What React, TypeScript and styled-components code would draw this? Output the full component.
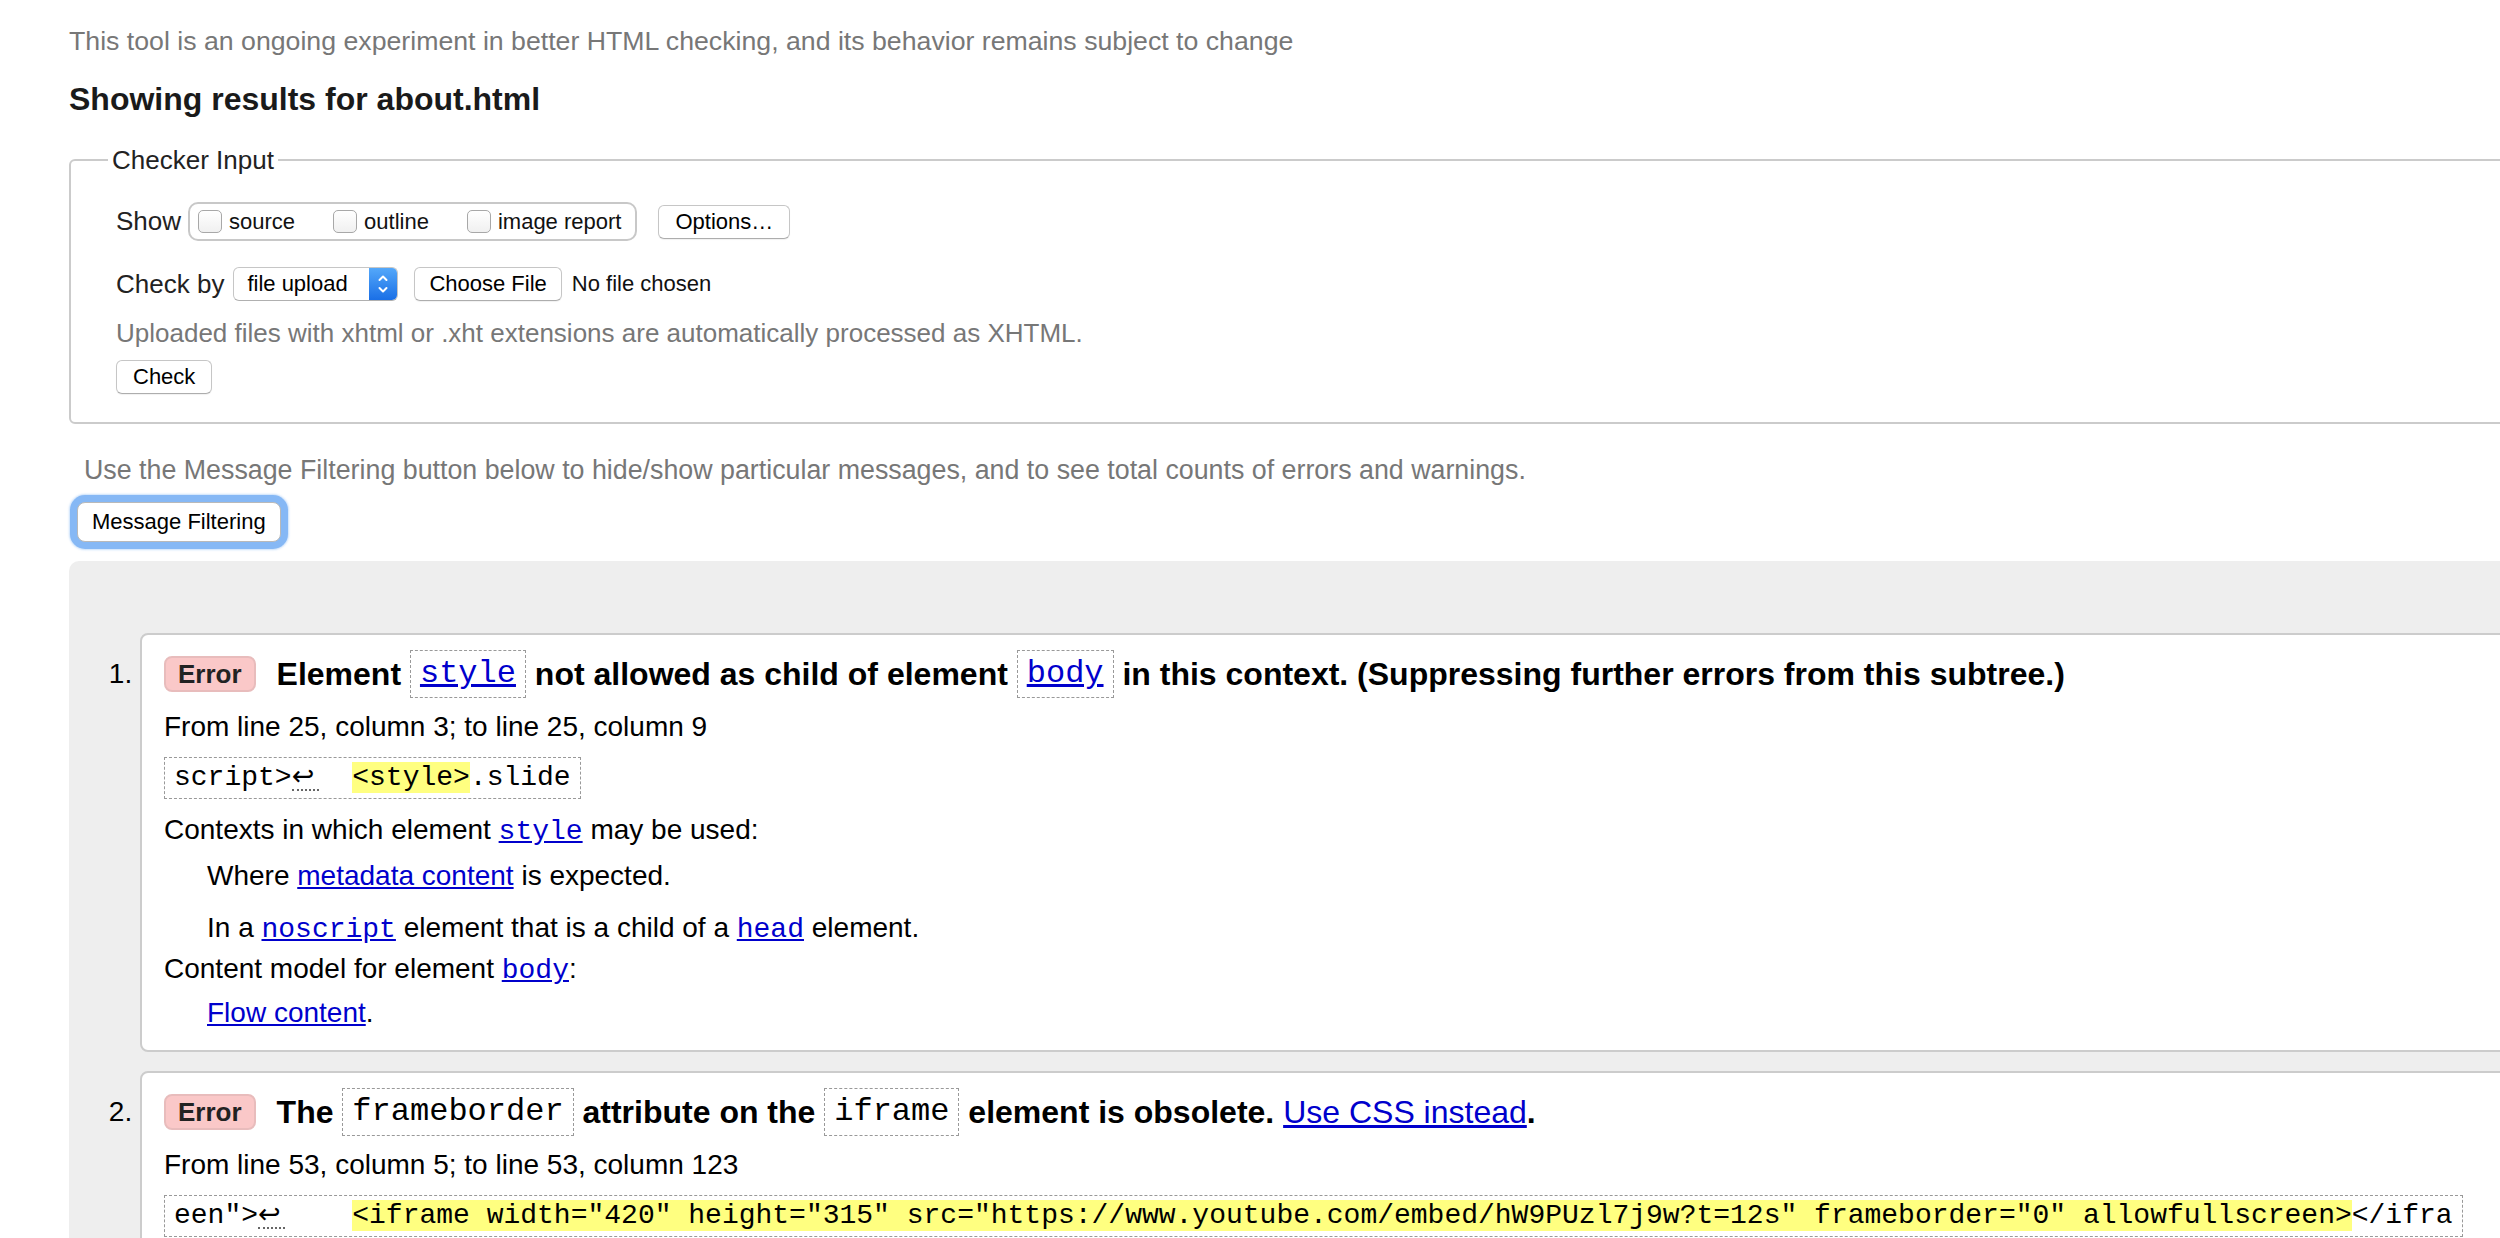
import React from "react";
import styled, { createGlobalStyle } from "styled-components";

const SANS = `"Liberation Sans", Arial, Helvetica, sans-serif`;
const MONO = `"Liberation Mono", "Courier New", monospace`;
const LINK = "#0000cc";

const GlobalStyle = createGlobalStyle`
  html, body {
    margin: 0;
    padding: 0;
    overflow: hidden;
    background: #fff;
  }
  body {
    font-family: ${SANS};
    color: #000;
  }
`;

const Page = styled.div`
  box-sizing: border-box;
  width: 2700px;
  padding-left: 69px;
`;

const Intro = styled.p`
  margin: 25px 0 0;
  font-size: 26.7px;
  line-height: 32px;
  color: #777;
`;

const Title = styled.h2`
  margin: 23px 0 0;
  font-size: 32px;
  line-height: 38px;
  font-weight: bold;
  color: #1a1a1a;
`;

const Fieldset = styled.fieldset`
  margin: 27px 0 0;
  padding: 0 0 28px 45px;
  border: 2px solid #cbcbcb;
  border-radius: 6px;
  min-width: 0;
`;

const Legend = styled.legend`
  margin-left: -8px;
  padding: 0 4px;
  font-size: 26px;
  line-height: 30px;
  color: #222;
`;

const Stack = styled.div`
  display: flex;
  flex-direction: column;
  align-items: flex-start;
`;

const Row = styled.div<{ $top: number; $height: number }>`
  display: flex;
  align-items: center;
  margin-top: ${(p) => p.$top}px;
  height: ${(p) => p.$height}px;
`;

const RowLabel = styled.span<{ $gap?: number }>`
  font-size: 26px;
  color: #222;
  margin-right: ${(p) => p.$gap ?? 9}px;
`;

const CheckGroup = styled.div`
  box-sizing: border-box;
  display: flex;
  align-items: center;
  height: 39px;
  padding: 0 14px 0 8px;
  border: 2px solid #c8c8c8;
  border-radius: 10px;
`;

const CheckItem = styled.label`
  display: flex;
  align-items: center;
  font-size: 22px;
  color: #111;

  & + & {
    margin-left: 38px;
  }
`;

const CheckBox = styled.input`
  appearance: none;
  box-sizing: border-box;
  width: 24px;
  height: 23px;
  margin: 0 7px 0 0;
  border: 1.5px solid #a8a8a8;
  border-radius: 5px;
  background: linear-gradient(#ffffff, #f0f0f0);
`;

const Button = styled.button<{ $left?: number; $pad?: number; $top?: number }>`
  box-sizing: border-box;
  height: 34px;
  margin: ${(p) => p.$top ?? 0}px 0 0 ${(p) => p.$left ?? 0}px;
  padding: 0 ${(p) => p.$pad ?? 16}px;
  font-family: ${SANS};
  font-size: 22px;
  color: #000;
  background: #fff;
  border: 1px solid #c6c6c6;
  border-bottom-color: #adadad;
  border-radius: 6px;
  box-shadow: 0 1px 1px rgba(0, 0, 0, 0.06);
`;

const Select = styled.div`
  box-sizing: border-box;
  display: flex;
  width: 165px;
  height: 34px;
  border: 1px solid #c6c6c6;
  border-bottom-color: #b0b0b0;
  border-radius: 6px;
  overflow: hidden;
  background: #fff;
  font-size: 22px;
`;

const SelectText = styled.span`
  flex: 1;
  display: flex;
  align-items: center;
  padding-left: 13px;
`;

const Stepper = styled.span`
  display: flex;
  align-items: center;
  justify-content: center;
  width: 28px;
  background: linear-gradient(#54a8fa, #1a6fe6);
`;

const FileName = styled.span`
  margin-left: 10px;
  font-size: 22px;
  color: #111;
`;

const Help = styled.p`
  margin: 17px 0 0;
  font-size: 26px;
  line-height: 30px;
  color: #777;
`;

const FilterNote = styled.p`
  margin: 31px 0 0 15px;
  font-size: 26.8px;
  line-height: 30px;
  color: #777;
`;

const FilterButton = styled.button`
  box-sizing: border-box;
  display: block;
  height: 40px;
  margin: 17px 0 0 8px;
  padding: 0 14px;
  font-family: ${SANS};
  font-size: 22px;
  color: #000;
  background: #fff;
  border: 1px solid #b9b9b9;
  border-radius: 8px;
  box-shadow: 0 0 0 7px #86b8f5, 0 0 2px 8px rgba(134, 184, 245, 0.45);
`;

const Results = styled.div`
  margin-top: 19px;
  padding-bottom: 60px;
  background: #eee;
  border-top-left-radius: 10px;
`;

const MessageList = styled.ol`
  margin: 0;
  padding: 72px 0 0 71px;
  list-style: decimal outside;
`;

const Message = styled.li`
  font-size: 28px;
  line-height: 34px;
  background: #fff;
  border: 2px solid #ccc;
  border-radius: 8px 0 0 8px;
  padding: 15px 0 20px 22px;

  & + & {
    margin-top: 19px;
  }
`;

const HeadingRow = styled.div`
  display: flex;
  align-items: center;
  height: 48px;
`;

const Badge = styled.span`
  box-sizing: border-box;
  display: inline-flex;
  align-items: center;
  height: 36px;
  padding: 0 12px;
  margin-right: 21px;
  background: #fac8c8;
  border: 2px solid #e8bcbc;
  border-radius: 8px;
  font-size: 26px;
  font-weight: bold;
  color: #222;
`;

const HeadText = styled.span`
  font-size: 32px;
  line-height: 48px;
  font-weight: bold;
  white-space: nowrap;
`;

const NameBox = styled.code`
  display: inline-block;
  vertical-align: top;
  padding: 6px 9px;
  border: 1px dashed #999;
  font-family: ${MONO};
  font-size: 32px;
  line-height: 34px;
  font-weight: normal;
`;

const Link = styled.a`
  color: ${LINK};
  text-decoration: underline;
  font-weight: normal;
`;

const CodeLink = styled(Link)`
  font-family: ${MONO};
`;

const Line = styled.p<{ $top: number; $indent?: number }>`
  margin: ${(p) => p.$top}px 0 0 ${(p) => p.$indent ?? 0}px;
`;

const Extract = styled.code`
  display: block;
  width: fit-content;
  margin-top: 13px;
  padding: 3px 9px;
  border: 1px dashed #999;
  font-family: ${MONO};
  font-size: 28px;
  line-height: 34px;
  white-space: pre;
`;

const LineBreak = styled.span`
  display: inline-block;
  width: 27px;
  line-height: 26px;
  text-align: left;
  font-family: "DejaVu Sans", sans-serif;
  font-size: 27px;
  border-bottom: 2px dotted #666;
`;

const Mark = styled.mark`
  background: #ffff80;
  color: #000;
`;

const StepperIcon = () => (
  <svg width="14" height="24" viewBox="0 0 14 24" fill="none" stroke="#fff" strokeWidth="2" strokeLinecap="round" strokeLinejoin="round">
    <polyline points="3.5,8 7,4.5 10.5,8" />
    <polyline points="3.5,16 7,19.5 10.5,16" />
  </svg>
);

const App: React.FC = () => {
  return (
    <Page>
      <GlobalStyle />
      <Intro>This tool is an ongoing experiment in better HTML checking, and its behavior remains subject to change</Intro>
      <Title>Showing results for about.html</Title>

      <Fieldset>
        <Legend>Checker Input</Legend>
        <Stack>
          <Row $top={27} $height={39}>
            <RowLabel $gap={7}>Show</RowLabel>
            <CheckGroup>
              <CheckItem><CheckBox type="checkbox" />source</CheckItem>
              <CheckItem><CheckBox type="checkbox" />outline</CheckItem>
              <CheckItem><CheckBox type="checkbox" />image report</CheckItem>
            </CheckGroup>
            <Button $left={21}>Options…</Button>
          </Row>
          <Row $top={26} $height={34}>
            <RowLabel>Check by</RowLabel>
            <Select>
              <SelectText>file upload</SelectText>
              <Stepper><StepperIcon /></Stepper>
            </Select>
            <Button $left={16} $pad={14}>Choose File</Button>
            <FileName>No file chosen</FileName>
          </Row>
          <Help>Uploaded files with xhtml or .xht extensions are automatically processed as XHTML.</Help>
          <Button $top={12}>Check</Button>
        </Stack>
      </Fieldset>

      <FilterNote>Use the Message Filtering button below to hide/show particular messages, and to see total counts of errors and warnings.</FilterNote>
      <FilterButton>Message Filtering</FilterButton>

      <Results>
        <MessageList>
          <Message>
            <HeadingRow>
              <Badge>Error</Badge>
              <HeadText>
                Element <NameBox><CodeLink href="#style">style</CodeLink></NameBox> not allowed as child of element{" "}
                <NameBox><CodeLink href="#body">body</CodeLink></NameBox> in this context. (Suppressing further errors from this subtree.)
              </HeadText>
            </HeadingRow>
            <Line $top={12}>From line 25, column 3; to line 25, column 9</Line>
            <Extract>script&gt;<LineBreak>↩</LineBreak>  <Mark>&lt;style&gt;</Mark>.slide</Extract>
            <Line $top={14}>
              Contexts in which element <CodeLink href="#style">style</CodeLink> may be used:
            </Line>
            <Line $top={10} $indent={43}>
              Where <Link href="#metadata">metadata content</Link> is expected.
            </Line>
            <Line $top={18} $indent={43}>
              In a <CodeLink href="#noscript">noscript</CodeLink> element that is a child of a{" "}
              <CodeLink href="#head">head</CodeLink> element.
            </Line>
            <Line $top={5}>
              Content model for element <CodeLink href="#body">body</CodeLink>:
            </Line>
            <Line $top={8} $indent={43}>
              <Link href="#flow">Flow content</Link>.
            </Line>
          </Message>

          <Message>
            <HeadingRow>
              <Badge>Error</Badge>
              <HeadText>
                The <NameBox>frameborder</NameBox> attribute on the <NameBox>iframe</NameBox> element is obsolete.{" "}
                <Link href="#css">Use CSS instead</Link>.
              </HeadText>
            </HeadingRow>
            <Line $top={12}>From line 53, column 5; to line 53, column 123</Line>
            <Extract>
              een"&gt;<LineBreak>↩</LineBreak>    <Mark>&lt;iframe width="420" height="315" src="https://www.youtube.com/embed/hW9PUzl7j9w?t=12s" frameborder="0" allowfullscreen&gt;</Mark>&lt;/ifra
            </Extract>
          </Message>
        </MessageList>
      </Results>
    </Page>
  );
};

export default App;
